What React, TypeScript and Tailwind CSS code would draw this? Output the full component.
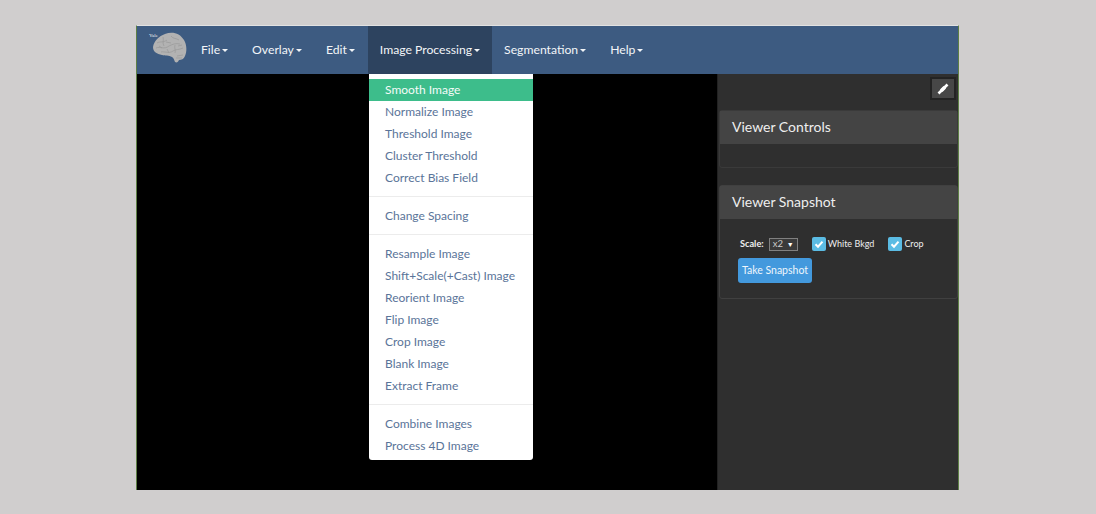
const groups = [
  ["Smooth Image", "Normalize Image", "Threshold Image", "Cluster Threshold", "Correct Bias Field"],
  ["Change Spacing"],
  ["Resample Image", "Shift+Scale(+Cast) Image", "Reorient Image", "Flip Image", "Crop Image", "Blank Image", "Extract Frame"],
  ["Combine Images", "Process 4D Image"],
];

const menus = ["File", "Overlay", "Edit", "Image Processing", "Segmentation", "Help"];

function Brain() {
  return (
    <div className="relative h-[38px] w-[40px] shrink-0">
      <span className="absolute left-0 top-[2px] font-['Liberation_Serif',serif] text-[5px] leading-none text-[#eeeeee]">Yale</span>
      <svg width="40" height="38" viewBox="0 0 40 38">
        <path
          d="M4 16C5 10 10 5 16 3C23 0 31 2 35 9C38 14 38 21 36 25C35 28 32 29 30 29C29 31 28 32 26 31C25 29 25 27 23 26C20 24 16 25 13 24C8 23 4 21 4 16Z"
          fill="#b2b2b2"
        />
        <path
          d="M8 12C11 10 14 12 18 9M7 17C11 15 15 19 20 15C24 13 27 12 31 13M12 21C15 20 20 23 24 20C27 18 30 19 34 17M22 5C24 8 27 7 30 9M14 6C15 9 13 12 15 15M26 14C25 17 27 19 26 22M10 15L13 17M18 18L20 22M29 15L33 14M17 11L22 12M28 25L34 24M27 27L33 27"
          fill="none"
          stroke="#989898"
          strokeWidth="0.7"
        />
      </svg>
    </div>
  );
}

function Caret() {
  return <span className="ml-[2px] inline-block border-x-[3.5px] border-t-[3.5px] border-x-transparent border-t-current align-middle" />;
}

function Check({ label }: { label: string }) {
  return (
    <label className="flex items-center gap-[2px] text-[9px] text-[#eeeeee]">
      <span className="flex h-[14px] w-[14px] items-center justify-center rounded-[2px] bg-[#5bbce4]">
        <svg width="10" height="10" viewBox="0 0 10 10">
          <path d="M1.5 5.2L4 7.7L8.5 2.6" fill="none" stroke="#ffffff" strokeWidth="2" />
        </svg>
      </span>
      {label}
    </label>
  );
}

export default function App() {
  return (
    <div className="h-[514px] w-[1096px] overflow-hidden bg-[#d0cece] pl-[136px] pt-[25px] font-['Lato','Open_Sans',sans-serif]">
      <div className="flex h-[465px] w-[823px] flex-col border-x border-t border-x-[#5d7f45] border-t-[#e2e2e2]">
        <nav className="relative flex h-[48px] shrink-0 items-stretch bg-[#3d5b81] pl-[12px] text-[12.2px] text-[#f2f5f8]">
          <div className="flex items-center">
            <Brain />
          </div>
          {menus.map((m) => (
            <div
              key={m}
              className={
                m === "Image Processing"
                  ? "ml-[1px] flex items-center whitespace-nowrap bg-[#2d435f] px-[12px]"
                  : "flex items-center whitespace-nowrap px-[12px]"
              }
            >
              {m}
              <Caret />
            </div>
          ))}
          <div className="absolute left-[232px] top-[48px] z-10 w-[164px] rounded-b-[3px] bg-white pb-[3px] pt-[5px] text-[12px] text-[#5a7499] shadow-md">
            {groups.map((g, i) => (
              <div key={g[0]}>
                {i > 0 && <div className="mb-[8px] mt-[7px] h-[1px] bg-[#ececec]" />}
                {g.map((item) => (
                  <div
                    key={item}
                    className={
                      item === "Smooth Image"
                        ? "flex h-[22px] items-center whitespace-nowrap bg-[#3dbd8b] px-[16px] text-[#f4fbf8]"
                        : "flex h-[22px] items-center whitespace-nowrap px-[16px]"
                    }
                  >
                    {item}
                  </div>
                ))}
              </div>
            ))}
          </div>
        </nav>
        <div className="flex min-h-0 flex-1">
          <div className="w-[580px] bg-black" />
          <aside className="flex-1 border-l border-[#222222] bg-[#2f2f2f] pl-[1px]">
            <div className="flex justify-end pr-[2px] pt-[3px]">
              <button className="flex h-[23px] w-[26px] items-center justify-center border-2 border-[#232323] bg-[#474747]">
                <svg width="14" height="14" viewBox="0 0 14 14">
                  <path d="M2.5 11.5L11.5 2.5" stroke="#ffffff" strokeWidth="2.6" />
                  <path d="M4 7.5L6.5 10L10 6.5L7.5 4Z" fill="#ffffff" />
                </svg>
              </button>
            </div>
            <section className="mt-[10px] h-[58px] rounded-[3px] border border-[#3a3a3a] bg-[#2f2f2f]">
              <h3 className="flex h-[33px] items-center bg-[#444444] pb-[2px] pl-[12px] text-[14px] text-[#eeeeee]">Viewer Controls</h3>
            </section>
            <section className="mt-[17px] h-[114px] rounded-[3px] border border-[#404040] bg-[#2f2f2f]">
              <h3 className="flex h-[33px] items-center bg-[#444444] pb-[2px] pl-[12px] text-[14px] text-[#eeeeee]">Viewer Snapshot</h3>
              <div className="flex items-center pl-[20px] pt-[18px]">
                <span className="text-[9.2px] font-bold text-[#eeeeee]">Scale:</span>
                <span className="ml-[5px] flex h-[13px] w-[29px] items-center justify-between border border-[#808080] bg-[#3a3a3a] px-[3px] text-[9.5px] text-[#cccccc]">
                  x2<span className="text-[7px] text-white">▼</span>
                </span>
                <span className="ml-[14px] flex gap-[14px]">
                  <Check label="White Bkgd" />
                  <Check label="Crop" />
                </span>
              </div>
              <button className="ml-[18px] mt-[7px] h-[25px] w-[74px] rounded-[3px] bg-[#4399dd] text-center text-[10.5px] text-[#eef6fc]">
                Take Snapshot
              </button>
            </section>
          </aside>
        </div>
      </div>
    </div>
  );
}
